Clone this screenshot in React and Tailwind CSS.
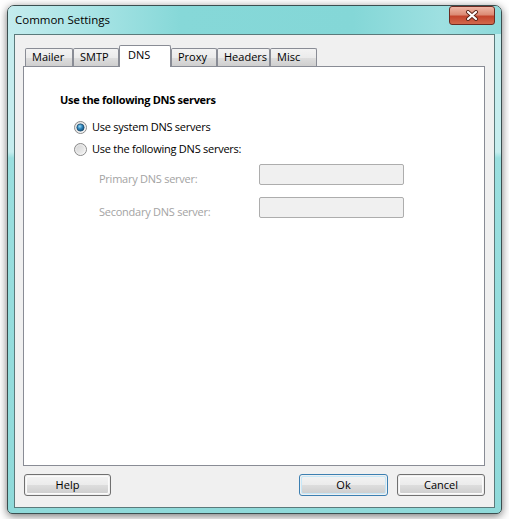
import React from "react";

function Radio({ checked }) {
  return (
    <svg width="13" height="13" viewBox="0 0 13 13" className="shrink-0">
      <defs>
        <linearGradient id={checked ? "rbc" : "rbu"} x1="0" y1="0" x2="1" y2="1">
          <stop offset="0" stopColor="#cfcfcf" />
          <stop offset="1" stopColor="#f7f7f7" />
        </linearGradient>
        <radialGradient id="rdot" cx="0.4" cy="0.35" r="0.75">
          <stop offset="0" stopColor="#9fdcf5" />
          <stop offset="0.45" stopColor="#2f86bd" />
          <stop offset="1" stopColor="#0f3f66" />
        </radialGradient>
      </defs>
      <circle cx="6.5" cy="6.5" r="6" fill={checked ? "url(#rbc)" : "url(#rbu)"} stroke="#8b8b8b" strokeWidth="1" />
      <circle cx="6.5" cy="6.5" r="4.8" fill="none" stroke="#ffffff" strokeOpacity="0.6" strokeWidth="0.8" />
      {checked && <circle cx="6.5" cy="6.5" r="3.6" fill="url(#rdot)" stroke="#1b4c70" strokeWidth="0.8" />}
    </svg>
  );
}

function Tab({ label, w, selected }) {
  if (selected) {
    return (
      <div
        className={`${w} h-[22px] -mb-px bg-white border border-b-0 border-[#898c95] rounded-t-[2px] pl-[8px] pt-[1px] leading-[16px] text-black relative z-10`}
      >
        {label}
      </div>
    );
  }
  return (
    <div
      className={`${w} h-[18px] border border-b-0 border-[#898c95] rounded-t-[2px] bg-[linear-gradient(180deg,#f3f3f3_0%,#ebebeb_50%,#dedede_51%,#cfcfcf_100%)] pl-[6px] leading-[16px] text-black`}
    >
      {label}
    </div>
  );
}

function Button({ label, w, isDefault }) {
  return (
    <div
      className={`${w} h-[22px] rounded-[3px] border ${
        isDefault ? "border-[#3c7fb1]" : "border-[#707070]"
      } p-px`}
    >
      <div
        className={`w-full h-full rounded-[2px] border ${
          isDefault ? "border-[#c5e7f8]" : "border-[#fbfbfb]"
        } bg-[linear-gradient(180deg,#f2f2f2_0%,#ebebeb_50%,#dddddd_51%,#cfcfcf_100%)] flex items-center justify-center text-black`}
      >
        {label}
      </div>
    </div>
  );
}

export default function App() {
  return (
    <div className="w-[509px] h-[519px] bg-white pl-[7px] pt-[5px] overflow-hidden font-['Open_Sans','Noto_Sans',sans-serif] text-[11px]">
      <div className="w-[495px] h-[509px] rounded-t-[7px] rounded-b-[5px] border border-[#3b4f50] bg-[linear-gradient(180deg,#c6edee_0px,#c6edee_146px,#9adfdf_152px,#8fdada_100%)] shadow-[0_2px_8px_rgba(0,0,0,0.55)] flex flex-col px-[6px] pb-[5px] relative">
        <div className="h-[28px] -mx-[6px] px-[7px] rounded-t-[6px] bg-[linear-gradient(90deg,#c4ecee_0%,#a6e3e4_18%,#86d8d8_35%,#84d7d7_70%,#9ee0e1_88%,#8ed9da_100%)] flex items-center relative">
          <span className="text-[11.5px] text-black leading-[16px] -mt-[1px]">Common Settings</span>
          <div className="absolute right-[6px] top-0 w-[46px] h-[19px] rounded-[3px] border border-[#6b2b22] bg-[linear-gradient(180deg,#efb7a6_0%,#dc8b75_45%,#c4452d_55%,#d2684c_100%)] flex items-center justify-center">
            <svg width="14" height="11" viewBox="0 0 14 11">
              <path d="M3 2 L11 9 M11 2 L3 9" stroke="#5a2418" strokeWidth="4" strokeLinecap="round" />
              <path d="M3 2 L11 9 M11 2 L3 9" stroke="#ffffff" strokeWidth="2.2" strokeLinecap="round" />
            </svg>
          </div>
        </div>
        <div className="flex-1 border border-[#5b7a7b] bg-[#f0f0f0] flex flex-col">
          <div className="pl-[8px] pt-[10px]">
            <div className="flex items-end h-[21px] pl-[2px]">
              <Tab label="Mailer" w="w-[48px]" />
              <Tab label="SMTP" w="w-[46px]" />
              <Tab label="DNS" w="w-[52px]" selected />
              <Tab label="Proxy" w="w-[46px]" />
              <Tab label="Headers" w="w-[53px]" />
              <Tab label="Misc" w="w-[47px]" />
            </div>
            <div className="w-[462px] h-[400px] border border-[#898c95] bg-white flex flex-col tracking-[-0.25px]">
              <div className="pl-[36px] pt-[25px] font-bold leading-[16px] text-black tracking-[-0.3px]">
                Use the following DNS servers
              </div>
              <div className="pl-[50px] pt-[11px] flex items-center gap-[5px] leading-[16px] text-black">
                <Radio checked />
                <span>Use system DNS servers</span>
              </div>
              <div className="pl-[50px] pt-[6px] flex items-center gap-[5px] leading-[16px] text-black">
                <Radio />
                <span>Use the following DNS servers:</span>
              </div>
              <div className="pl-[75px] pt-[7px] flex items-start leading-[16px] text-[#a3a3a3]">
                <span className="w-[160px] pt-[7px]">Primary DNS server:</span>
                <div className="w-[145px] h-[21px] rounded-[2px] border border-[#adadad] bg-[#f0f0f0]" />
              </div>
              <div className="pl-[75px] pt-[10px] flex items-start leading-[16px] text-[#a3a3a3]">
                <span className="w-[160px] pt-[7px]">Secondary DNS server:</span>
                <div className="w-[145px] h-[21px] rounded-[2px] border border-[#adadad] bg-[#f0f0f0]" />
              </div>
            </div>
          </div>
          <div className="flex items-center pl-[9px] pt-[8px]">
            <Button label="Help" w="w-[87px]" />
            <div className="w-[188px]" />
            <Button label="Ok" w="w-[89px]" isDefault />
            <div className="w-[9px]" />
            <Button label="Cancel" w="w-[88px]" />
          </div>
        </div>
      </div>
    </div>
  );
}
